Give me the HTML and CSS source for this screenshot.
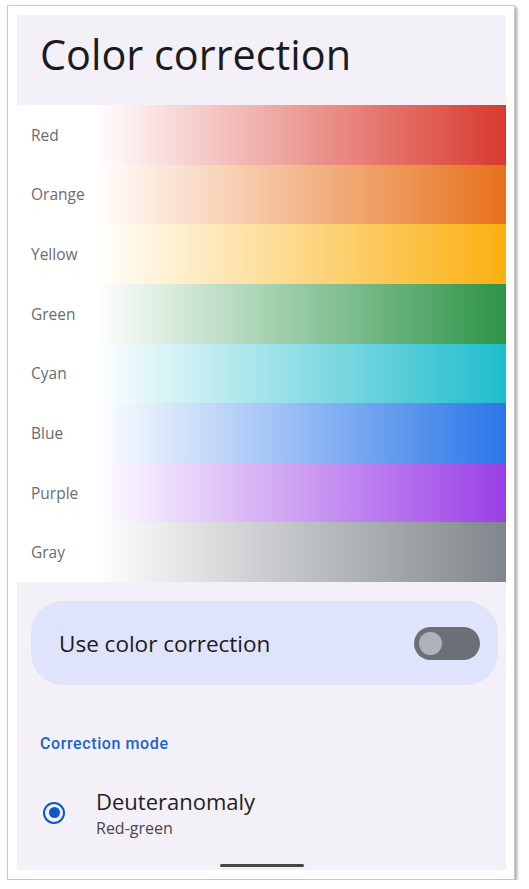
FILE: index.html
```html
<!DOCTYPE html>
<html lang="en">
<head>
    <meta charset="UTF-8">
    <meta name="viewport" content="width=device-width, initial-scale=1.0">
    <title>Color correction</title>
    <link rel="stylesheet" href="styles.css">
</head>
<body>

    <div class="frame">
        <div class="screen">
            <div class="header">
                <h1>Color correction</h1>
            </div>

            <!-- preview rows -->
            <div class="swatches">
                <div class="swatch swatch-red"><span>Red</span></div>
                <div class="swatch swatch-orange"><span>Orange</span></div>
                <div class="swatch swatch-yellow"><span>Yellow</span></div>
                <div class="swatch swatch-green"><span>Green</span></div>
                <div class="swatch swatch-cyan"><span>Cyan</span></div>
                <div class="swatch swatch-blue"><span>Blue</span></div>
                <div class="swatch swatch-purple"><span>Purple</span></div>
                <div class="swatch swatch-gray"><span>Gray</span></div>
            </div>

            <div class="main-switch">
                <span>Use color correction</span>
                <div class="toggle"><div class="thumb"></div></div>
            </div>

            <div class="section-title">Correction mode</div>

            <div class="option">
                <div class="radio"><div class="dot"></div></div>
                <div class="option-text">
                    <div class="option-title">Deuteranomaly</div>
                    <div class="option-sub">Red-green</div>
                </div>
            </div>

            <div class="home-bar"></div>
        </div>
    </div>

</body>
</html>
```

FILE: styles.css
```css
body {
    margin: 0;
    padding: 0;
    background: #fff;
    font-family: 'Open Sans', Roboto, sans-serif;
}
.frame {
    box-sizing: border-box;
    width: 508px;
    height: 875px;
    margin: 5px 0 0 7px;
    padding: 9px 8px 9px 9px;
    background: #fff;
    border: 1px solid #c9c9c9;
    box-shadow: 2px 2px 3px rgba(0, 0, 0, 0.35);
}
.screen {
    width: 489px;
    height: 855px;
    background: #f3f1f7;
    display: flex;
    flex-direction: column;
}
.header {
    height: 90px;
    box-sizing: border-box;
    padding: 13px 23px 0;
}
h1 {
    margin: 0;
    font-weight: 400;
    font-size: 41.4px;
    line-height: 52px;
    color: #1b1b1f;
}
.swatches {
    height: 477px;
    display: grid;
    grid-template-rows: repeat(8, 1fr);
    background: #fff;
}
.swatch {
    display: flex;
    align-items: center;
    padding-left: 14px;
    font-size: 15.5px;
    color: #6b6c72;
}
.swatch-red { background: linear-gradient(to right, #fff 78px, #d93a2e); }
.swatch-orange { background: linear-gradient(to right, #fff 78px, #e8711a); }
.swatch-yellow { background: linear-gradient(to right, #fff 78px, #fbb010); }
.swatch-green { background: linear-gradient(to right, #fff 78px, #2d9447); }
.swatch-cyan { background: linear-gradient(to right, #fff 78px, #1fbccc); }
.swatch-blue { background: linear-gradient(to right, #fff 78px, #2a76e8); }
.swatch-purple { background: linear-gradient(to right, #fff 78px, #9a3fe6); }
.swatch-gray { background: linear-gradient(to right, #fff 78px, #80868b); }

.main-switch {
    margin: 19px 0 0 14px;
    width: 467px;
    height: 84px;
    box-sizing: border-box;
    border-radius: 32px;
    background: #dfe3fb;
    display: flex;
    align-items: center;
    justify-content: space-between;
    padding: 0 18px 0 28px;
    font-size: 22.5px;
    color: #1b1b1f;
}
.toggle {
    width: 66px;
    height: 33px;
    border-radius: 17px;
    background: #6d6f77;
    display: flex;
    align-items: center;
    padding-left: 5px;
    box-sizing: border-box;
}
.thumb {
    width: 23px;
    height: 23px;
    border-radius: 50%;
    background: #b1b1bb;
}
.section-title {
    margin: 49px 0 0 23px;
    font-family: Roboto, sans-serif;
    font-size: 16px;
    line-height: 20px;
    font-weight: 500;
    letter-spacing: 0.6px;
    color: #1a62d2;
}
.option {
    display: flex;
    align-items: center;
    margin-top: 32px;
}
.radio {
    width: 22px;
    height: 22px;
    box-sizing: border-box;
    border: 2.5px solid #0b57d0;
    border-radius: 50%;
    margin: 0 31px 0 26px;
    display: flex;
    align-items: center;
    justify-content: center;
}
.dot {
    width: 11px;
    height: 11px;
    border-radius: 50%;
    background: #0b57d0;
}
.option-title {
    font-size: 22px;
    line-height: 30px;
    color: #1f1f1f;
}
.option-sub {
    font-size: 16px;
    line-height: 22px;
    color: #46474c;
    margin-top: 1px;
}
.home-bar {
    margin: auto auto 3px;
    width: 84px;
    height: 3px;
    border-radius: 2px;
    background: #46464a;
}
```
